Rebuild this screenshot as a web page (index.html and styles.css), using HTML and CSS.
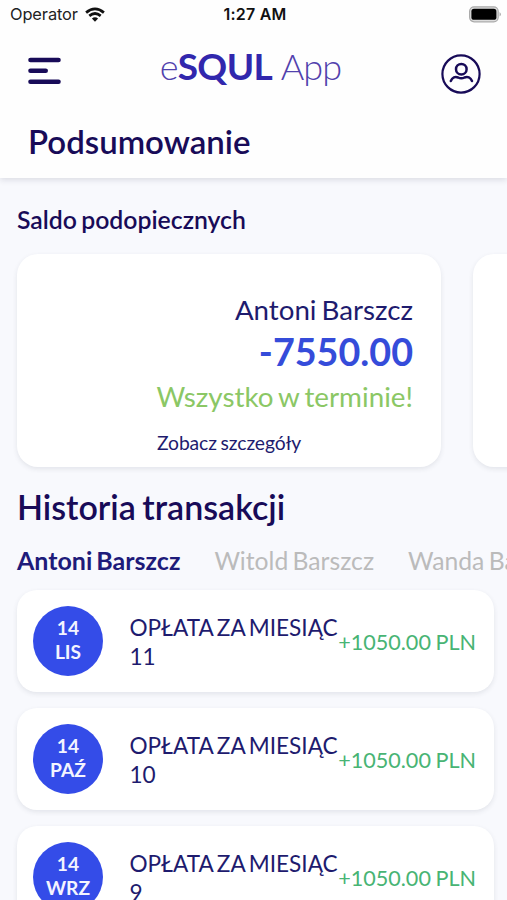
FILE: index.html
```html
<!DOCTYPE html>
<html lang="pl">
<head>
<meta charset="utf-8">
<title>eSQUL App</title>
<link rel="stylesheet" href="styles.css">
</head>
<body>
<div class="app">
  <header class="header">
    <div class="status">
      <div class="carrier"><span>Operator</span>
        <svg width="20" height="16" viewBox="0 0 20 16" fill="none" stroke="#111" stroke-width="2.7"><path d="M1.1 5.6Q10-2 18.9 5.6M4.3 8.9Q10 4.1 15.7 8.9"/><path d="M6.9 11.5Q10 8.9 13.1 11.5L10 14.8Z" fill="#111" stroke="none"/></svg>
      </div>
      <span class="time">1:27 AM</span>
      <svg class="battery" width="34" height="18" viewBox="0 0 34 18"><rect x="1.6" y="1.8" width="28.6" height="15" rx="4.5" fill="#ddd" stroke="#aaa" stroke-width="1.2"/><rect x="3.4" y="3.8" width="25" height="11" rx="2.6" fill="#000"/><path d="M31.6 7Q34 9.3 31.6 11.6Z" fill="#999"/></svg>
    </div>
    <div class="topbar">
      <svg class="menu" width="34" height="28" viewBox="0 0 34 28" stroke="#180b58" stroke-width="4.6" stroke-linecap="round"><path d="M2.5 3H30.5M2.5 13.8H17.7M2.5 24.7H30.5"/></svg>
      <div class="logo"><span class="logo-e">e</span><b>SQUL</b> <span class="logo-app">App</span></div>
      <svg class="profile" width="40" height="40" viewBox="0 0 40 40" fill="none" stroke="#180b58" stroke-linecap="round"><circle cx="20" cy="20" r="18.6" stroke-width="2.2"/><circle cx="20.3" cy="15.2" r="5.3" stroke-width="2.5"/><path d="M9.8 27C11.3 23.3 14.3 22.2 17.1 23.5Q20.3 25.2 23.5 23.5C26.5 22.2 29.5 23.3 31 27" stroke-width="2.5"/></svg>
    </div>
    <h1 class="title"><span>Podsumowanie</span></h1>
  </header>
  <main class="content">
    <h2 class="subtitle"><span>Saldo podopiecznych</span></h2>
    <div class="balances">
      <section class="balance">
        <div class="name">Antoni Barszcz</div>
        <div class="sum">-7550.00</div>
        <div class="state">Wszystko w terminie!</div>
        <a class="details">Zobacz szczegóły</a>
      </section>
      <section class="balance"></section>
    </div>
    <h2 class="history"><span>Historia transakcji</span></h2>
    <nav class="tabs"><span class="tab active">Antoni Barszcz</span><span class="tab">Witold Barszcz</span><span class="tab">Wanda Barszcz</span></nav>
    <div class="list">
      <article class="row"><div class="date"><span>14</span><span>LIS</span></div><div class="desc"><span>OPŁATA ZA MIESIĄC</span><br>11</div><div class="amount">+1050.00 PLN</div></article>
      <article class="row"><div class="date"><span>14</span><span>PAŹ</span></div><div class="desc"><span>OPŁATA ZA MIESIĄC</span><br>10</div><div class="amount">+1050.00 PLN</div></article>
      <article class="row"><div class="date"><span>14</span><span>WRZ</span></div><div class="desc"><span>OPŁATA ZA MIESIĄC</span><br>9</div><div class="amount">+1050.00 PLN</div></article>
    </div>
  </main>
</div>
</body>
</html>
```
FILE: styles.css
```css
* { box-sizing: border-box; }
body { margin: 0; }
h1, h2 { margin: 0; }
svg { display: block; flex: none; }
.app {
  width: 507px;
  height: 900px;
  overflow: hidden;
  display: flex;
  flex-direction: column;
  background: #f8f9fd;
  color: #1e1b6e;
  font-family: Lato, sans-serif;
  white-space: nowrap;
}
.header {
  flex: none;
  height: 178px;
  background: #fefefe;
  box-shadow: 0 2px 6px rgba(40, 45, 70, .14);
}
.status {
  display: grid;
  grid-template-columns: 1fr auto 1fr;
  align-items: center;
  height: 29px;
  padding: 0 5px 0 10px;
  color: #222;
  font: 16.4px/29px Inter, sans-serif;
}
.carrier { display: flex; align-items: center; gap: 7px; letter-spacing: -.1px; }
.time { margin-left: -2px; font-weight: 600; font-size: 16px; letter-spacing: .2px; color: #111; }
.battery { justify-self: end; margin-top: -2px; }
.topbar {
  display: flex;
  justify-content: space-between;
  align-items: flex-start;
  height: 85px;
  padding: 0 26px 0 28px;
}
.menu { margin-top: 28px; }
.profile { margin-top: 25px; }
.logo { margin-left: -2px; font-size: 37px; line-height: 44px; margin-top: 15px; letter-spacing: -.9px; color: #3127ad; }
.logo b { letter-spacing: -.6px; }
.logo-e, .logo-app { font-weight: 300; font-size: 36px; color: #5141ad; }
.title { padding-left: 28px; font-size: 33px; line-height: 55px; font-weight: 600; color: #180b58; }
.content { padding-left: 17px; }
.subtitle { font-size: 24.8px; line-height: 30px; padding-top: 27px; height: 76px; font-weight: 600; word-spacing: -2px; color: #180b58; }
.balances { display: flex; gap: 32px; height: 213px; }
.balance {
  flex: none;
  display: flex;
  flex-direction: column;
  align-items: flex-end;
  width: 424px;
  padding: 39px 28px 0 0;
  border-radius: 21px;
  background: #fff;
  box-shadow: 0 2px 5px rgba(40, 45, 70, .1);
}
.name { font-size: 27.7px; line-height: 34px; word-spacing: -2px; }
.sum { font-size: 37.7px; line-height: 50px; font-weight: 700; color: #354cda; }
.state { font-size: 27.8px; line-height: 39px; word-spacing: -2px; color: #8bc765; }
.details { align-self: flex-start; margin-left: 140px; font-size: 19.3px; line-height: 54px; letter-spacing: -.1px; word-spacing: -1px; }
.history { font-size: 34px; line-height: 40px; padding-top: 20px; height: 73px; font-weight: 600; word-spacing: -2px; color: #180b58; }
.tabs { display: flex; gap: 34px; height: 50px; font-size: 24.7px; line-height: 41px; word-spacing: -2px; color: #bbb; }
.tab { flex: none; }
.active { font-weight: 700; font-size: 25px; color: #1e1b7a; }
.list { display: flex; flex-direction: column; gap: 16px; }
.row {
  display: flex;
  align-items: center;
  width: 477px;
  height: 102px;
  flex: none;
  padding: 0 18px 0 16px;
  border-radius: 20px;
  background: #fff;
  box-shadow: 0 2px 5px rgba(40, 45, 70, .1);
}
.date {
  flex: none;
  display: flex;
  flex-direction: column;
  align-items: center;
  justify-content: center;
  width: 70px;
  height: 70px;
  padding-bottom: 3px;
  border-radius: 50%;
  background: #344ce8;
  color: #f3f4ff;
  font-size: 19.2px;
  line-height: 24px;
  font-weight: 700;
}
.desc { margin-left: 26.5px; padding-top: 2px; font-size: 22.6px; line-height: 29px; word-spacing: -2px; }
.amount { margin-left: auto; padding-top: 1px; font-size: 21.6px; line-height: 30px; word-spacing: -1px; color: #48b474; }
```
